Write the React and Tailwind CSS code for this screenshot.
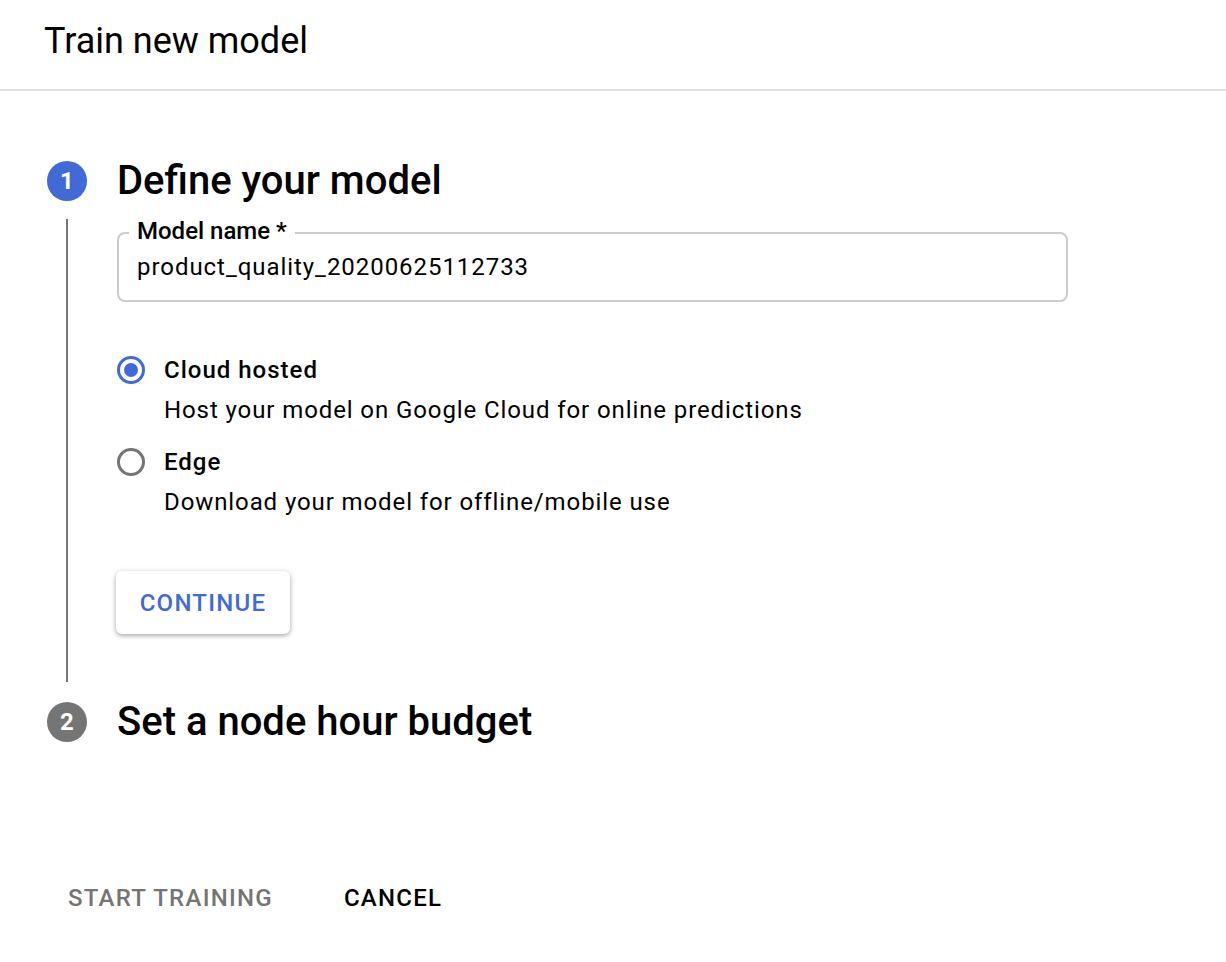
import React from 'react';

const StepBadge = ({ n, active }) => (
  <div
    className={`w-10 h-10 rounded-full flex items-center justify-center text-white text-[24px] font-bold ${
      active ? 'bg-[#3f6ad8]' : 'bg-[#757575]'
    }`}
  >
    {n}
  </div>
);

const Radio = ({ checked, label, hint, className }) => (
  <div className={`flex ${className}`}>
    <div className="w-[28px] h-[30px] flex items-center">
      <div
        className={`w-[28px] h-[28px] rounded-full border-[3px] flex items-center justify-center ${
          checked ? 'border-[#3f6ad8]' : 'border-[#757575]'
        }`}
      >
        {checked && <div className="w-[14px] h-[14px] rounded-full bg-[#3f6ad8]" />}
      </div>
    </div>
    <div className="ml-[19px]">
      <div className="text-[24px] leading-[30px] font-medium tracking-[1px] text-black">{label}</div>
      <div className="text-[24px] leading-[30px] mt-[10px] tracking-[0.9px] text-black">{hint}</div>
    </div>
  </div>
);

const App = () => {
  return (
    <div className="min-h-screen bg-white font-['Roboto',sans-serif] text-black">
      {/* Header */}
      <div className="h-[91px] border-b-2 border-[#e0e0e0] flex items-center px-[44px]">
        <h1 className="text-[36px] leading-none font-normal -mt-[8px]">Train new model</h1>
      </div>

      {/* Stepper */}
      <div className="pt-[70px] pl-[47px]">
        {/* Step 1 */}
        <div className="flex">
          <div className="w-10 flex flex-col items-center">
            <StepBadge n="1" active />
            <div className="w-[2px] flex-1 bg-[#757575] mt-[18px]" />
          </div>
          <div className="ml-[30px] pb-[48px]">
            <h2 className="text-[40px] leading-[40px] font-medium">Define your model</h2>

            <div className="relative mt-[31px] w-[951px] h-[70px] border-2 border-[#cccccc] rounded-lg px-[18px] pt-[20px]">
              <span className="absolute -top-[16px] left-[10px] bg-white px-[8px] text-[24px] leading-[26px] font-medium">
                Model name *
              </span>
              <div className="text-[24px] leading-[26px] tracking-[0.95px]">product_quality_20200625112733</div>
            </div>

            <Radio
              checked
              className="mt-[53px]"
              label="Cloud hosted"
              hint="Host your model on Google Cloud for online predictions"
            />
            <Radio
              className="mt-[22px]"
              label="Edge"
              hint="Download your model for offline/mobile use"
            />

            <button className="mt-[54px] -ml-[1px] w-[174px] h-[63px] rounded-md bg-white shadow-[0_2px_4px_rgba(0,0,0,0.25),0_1px_6px_rgba(0,0,0,0.12)] text-[24px] font-medium tracking-[1.25px] text-[#3f6ad8]">
              CONTINUE
            </button>
          </div>
        </div>

        {/* Step 2 */}
        <div className="flex items-center mt-[20px]">
          <StepBadge n="2" />
          <h2 className="ml-[30px] text-[40px] leading-[40px] font-medium">Set a node hour budget</h2>
        </div>
      </div>

      {/* Footer actions */}
      <div className="flex items-center mt-[138px] pl-[68px] text-[24px] font-medium tracking-[1.25px]">
        <button className="text-[#757575]">START TRAINING</button>
        <button className="ml-[71px] text-black">CANCEL</button>
      </div>
    </div>
  );
};

export default App;
